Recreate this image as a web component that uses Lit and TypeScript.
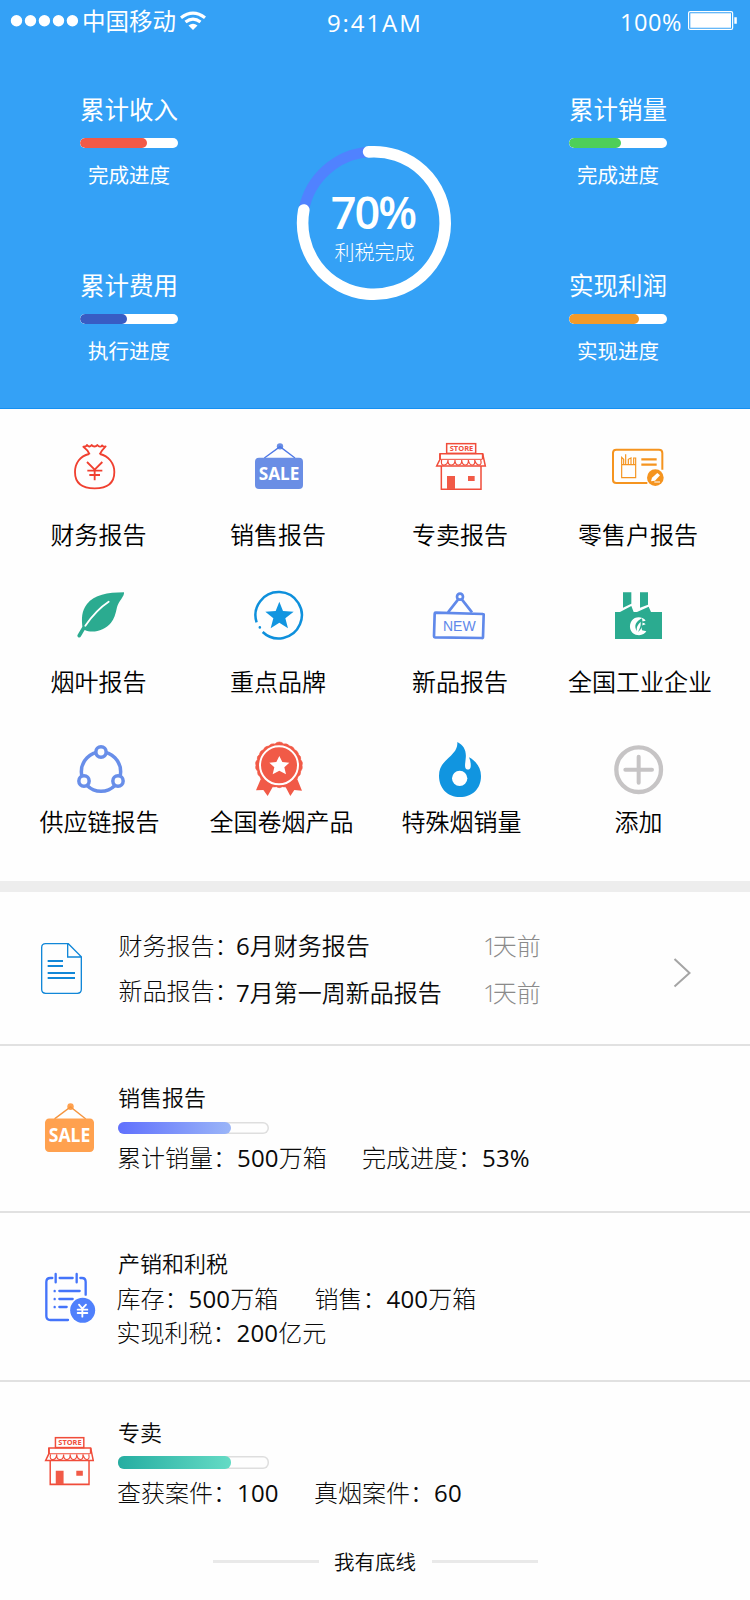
import { LitElement, html, svg, css, type SVGTemplateResult } from "lit";
import { customElement, property } from "lit/decorators.js";
import { styleMap } from "lit/directives/style-map.js";

const bag = svg`<g fill="none" stroke="#f04030" stroke-width="5.5" stroke-linejoin="round">
  <path d="M267 102C240 108 225 130 225 156C225 192 250 205 284 205C318 205 343 192 343 156C343 130 326 108 300 102"/>
  <path d="M269 103C264 92 257 85 250 80C255 80 260 79 261 75C266 82 272 80 275 75C279 81 288 81 292 75C297 81 303 82 306 76C309 80 313 81 317 79C310 86 303 94 299 103"/>
  <path d="M261 126L284 149L307 126M262 152H307M268 165H300M284 149V181"/></g>`;
const sale = (c: string, line: string) => svg`<g>
  <circle cx="840" cy="79" r="9.5" fill=${c}/>
  <path d="M793 114L840 80L885 114" fill="none" stroke=${line} stroke-width="4"/>
  <rect x="765" y="113" width="144" height="94" rx="12" fill=${c}/>
  <text x="776" y="180" textLength="122" lengthAdjust="spacingAndGlyphs" font-family="Noto Sans, Open Sans, sans-serif" font-weight="700" font-size="54" fill="#fff">SALE</text></g>`;
const store = svg`<g fill="none" stroke="#f04c3a" stroke-width="4.5">
  <rect x="215" y="71" width="87" height="29"/>
  <path d="M195 101H323L331 138H185L195 118Z"/>
  <path d="M195 118V101M323 101V118" stroke-width="5"/>
  <path d="M195 118H322" stroke-width="3"/>
  <path d="M200 120Q196 137 208 135Q218 134 219 120Q218 136 230 135Q240 134 240 120Q240 136 251 135Q261 134 260 120Q261 136 272 135Q281 134 280 120Q283 136 293 135Q301 134 299 120Q304 136 313 135Q321 133 317 120" stroke-width="3.5"/>
  <path d="M199 138V208H318V138"/>
  <path d="M216 168H240V207H216ZM279 168H299V183H279Z" fill="#f15a47" stroke="none"/>
  <text x="224" y="93" textLength="71" lengthAdjust="spacingAndGlyphs" font-family="Open Sans, Noto Sans, sans-serif" font-weight="700" font-size="20" fill="#f04c3a" stroke="none">STORE</text></g>`;
const card = svg`<g fill="none" stroke="#f5941f" stroke-width="6">
  <path d="M817 189H724Q714 189 714 179V99Q714 89 724 89H852Q862 89 862 99V149"/>
  <path d="M740 134H782V173H740ZM740 134V112L746 118V134M752 134V103M760 134V118L768 114V134M776 134V114H782V134" stroke-width="3.5"/>
  <path d="M799 118H845M799 134H845" stroke-width="6.500"/>
  <circle cx="841" cy="173" r="25" fill="#f5941f" stroke="none"/>
  <path d="M828 184L831 173L847 159L855 166L840 182Z" fill="#fff" stroke="none"/>
  <path d="M838 186H855" stroke="#fff" stroke-width="3"/></g>`;
const leaf = svg`<g><path d="M372 517C374 529 356 543 351 562C347 583 342 597 333 608C314 632 278 641 254 630L243 649Q239 656 233 650L232 646L247 620C245 595 244 574 261 552C283 525 322 517 372 517Z" fill="#2bab90"/>
  <path d="M326 545C294 566 276 588 256 617" fill="none" stroke="#fff" stroke-width="5.5" stroke-linecap="round"/></g>`;
const starBadge = svg`<g fill="none" stroke="#0e90dc" stroke-width="7.500" stroke-linecap="round">
  <path d="M769.800 605A69.500 69.500 0 1 1 788 634" stroke-linecap="butt"/><path d="M779.500 620V620.5"/>
  <path d="M838 543L849 571L881 573L856 593L864 623L838 606L812 623L820 593L796 573L827 571Z" fill="#1195e0" stroke="none"/></g>`;
const newSign = svg`<g fill="none" stroke="#6089ea" stroke-width="8">
  <circle cx="255" cy="530" r="9"/><path d="M249 539L219 577M261 539L291 577"/>
  <path d="M182 578L324 582Q327 582 326 586L324 651Q324 655 320 654L180 652Q177 652 177 649L179 581Q179 578 182 578Z"/>
  <text x="204" y="633" textLength="98" lengthAdjust="spacingAndGlyphs" font-family="Liberation Sans, sans-serif" font-size="46" fill="#6089ea" stroke="none">NEW</text></g>`;
const factory = svg`<g fill="#2bab90">
  <path d="M744 517H769V551L744 563ZM795 517H819V554L795 563Z"/>
  <path d="M720 576H735L769 558L776 576H786L821 560L828 576H861V657H720Z"/>
  <path d="M812 602C805 589 780 587 770 602C760 617 765 638 782 644C797 648 809 643 814 634L801 631L799 617L812 613C808 608 800 607 795 606Z" fill="#fff"/>
  <path d="M801 595C783 604 775 617 786 634C783 623 788 614 797 605C798 616 796 622 789 636C804 626 804 611 801 595Z"/></g>`;
const share = svg`<g fill="none" stroke="#688ee9">
  <circle cx="303" cy="185" r="59" stroke-width="10.500"/>
  <g fill="#fdfdfd" stroke-width="10.500"><circle cx="303" cy="126" r="15.500"/><circle cx="252" cy="213" r="15.500"/><circle cx="354" cy="213" r="15.500"/></g></g>`;
const medal = svg`<g fill="#f15a47">
  <path d="M782 208L768 241L790 240L803 258L821 226H854L871 258L883 240L906 242L892 208Z"/>
  <path d="M838 96Q846 96 851 102Q861 99 869 108Q879 108 884 119Q894 123 896 134Q904 139 902 149Q910 157 906 166Q909 176 902 184Q903 195 894 200Q892 211 882 214Q876 225 865 225Q857 234 847 230Q838 236 829 230Q818 234 810 225Q798 224 793 214Q782 210 780 200Q771 194 773 184Q764 176 768 166Q764 156 772 149Q770 139 778 134Q780 122 790 119Q795 108 806 108Q814 99 825 102Q830 96 838 96Z" stroke="#f15a47" stroke-width="2"/>
  <circle cx="837" cy="166" r="57" fill="none" stroke="#fff" stroke-width="6"/>
  <path d="M838 138L847 156L868 158L853 172L858 193L838 182L818 193L823 172L808 158L829 156Z" fill="#fff"/></g>`;
const flame = svg`<g><path d="M247 96C267 106 275 123 272 146C271 158 269 165 271 173C276 183 286 179 287 170C288 160 286 151 282 142C303 153 318 172 318 198C318 237 291 261 255 261C218 261 192 235 192 197C192 175 202 160 221 143C239 127 248 115 247 96Z" fill="#1195e0"/><circle cx="254" cy="205" r="23" fill="#fff"/></g>`;
const add = svg`<g fill="none" stroke="#c6c4c5"><circle cx="791" cy="179" r="67" stroke-width="13"/><path d="M791 140V218M751 179H831" stroke-width="12" stroke-linecap="round"/></g>`;
const doc = svg`<g fill="none" stroke="#1187d8" stroke-width="4"><path d="M205 131L244 170V268Q244 280 232 280H137Q125 280 125 268V143Q125 131 137 131H205ZM203 131V171H244"/>
  <path d="M143 183H189M143 198H189M143 219H225M143 234H225" stroke-width="6"/></g>`;
const tax = svg`<g fill="none" stroke="#4474fa" stroke-width="7" stroke-linecap="round">
  <path d="M157 234H151Q139 234 139 246V348Q139 360 151 360H204M179 234H218M241 234H246Q257 234 257 246V284M167 222V247M230 222V247" />
  <path d="M178 273H239M178 297H218M178 321H200M164 273V273.5M164 297V297.5M164 321V321.500"/>
  <circle cx="248" cy="331" r="37.500" fill="#4f80fc" stroke="none"/>
  <path d="M237 314L247 326L258 314M233 329H262M233 339H262M247 327V350" stroke="#fff" stroke-width="5.500"/></g>`;

interface Tile { label: string; icon: SVGTemplateResult; box: string; dx: number }
const ROWS: { cls: string; tiles: Tile[] }[] = [
  { cls: "first", tiles: [
    { label: "财务报告", icon: bag, box: "207 60 180 180", dx: -0.5 },
    { label: "销售报告", icon: sale("#6a8ee5", "#4e78e6"), box: "747 60 180 180", dx: -1 },
    { label: "专卖报告", icon: store, box: "162 60 180 180", dx: 1 },
    { label: "零售户报告", icon: card, box: "702 60 180 180", dx: -1 }] },
  { cls: "second", tiles: [
    { label: "烟叶报告", icon: leaf, box: "207 504 180 180", dx: -0.5 },
    { label: "重点品牌", icon: starBadge, box: "747 502 180 180", dx: -1 },
    { label: "新品报告", icon: newSign, box: "162 504 180 180", dx: 1 },
    { label: "全国工业企业", icon: factory, box: "702 504 180 180", dx: 1 }] },
  { cls: "third", tiles: [
    { label: "供应链报告", icon: share, box: "207 90 180 180", dx: 0.5 },
    { label: "全国卷烟产品", icon: medal, box: "747 90 180 180", dx: 2.5 },
    { label: "特殊烟销量", icon: flame, box: "162 90 180 180", dx: 2.5 },
    { label: "添加", icon: add, box: "702 90 180 180", dx: -0.5 }] },
];

@customElement("kpi-meter")
export class KpiMeter extends LitElement {
  @property() name = "";
  @property() caption = "";
  @property() color = "";
  @property({ type: Number }) value = 0;
  static styles = css`
    :host { display: block; width: 98px; color: #fff; text-align: center; white-space: nowrap; }
    .name { font-size: 24.500px; line-height: 32px; height: 32px; }
    .track { height: 10px; margin-top: 12px; border-radius: 5px; background: #fff; overflow: hidden; }
    .fill { height: 10px; border-radius: 5px; }
    .caption { font-size: 20.500px; line-height: 28px; margin-top: 13px; height: 28px; }
  `;
  render() {
    return html`<div class="name">${this.name}</div>
      <div class="track"><div class="fill" style=${styleMap({ width: `${this.value}px`, background: this.color })}></div></div>
      <div class="caption">${this.caption}</div>`;
  }
}

@customElement("app-root")
export class AppRoot extends LitElement {
  static styles = css`
    :host { display: block; width: 750px; height: 1600px; overflow: hidden; background: #fefefe; color: #0a0a0a;
      font-family: "Open Sans", "Noto Sans CJK SC", sans-serif; font-size: 24px; font-weight: 350; }
    * { box-sizing: border-box; }
    svg { display: block; flex: none; }
    .hero { height: 409px; background: #34a1f6; border-bottom: 1px solid #1590f2; color: #fff; font-weight: 400; }
    .status { display: flex; height: 42px; padding-left: 10px; white-space: nowrap; }
    .carrier { font-size: 23.500px; line-height: 42px; margin-left: 3px; width: 97px; }
    .time { font-size: 24px; line-height: 46px; margin-left: 120px; width: 100px; letter-spacing: 1.900px; }
    .power { font-size: 23.500px; line-height: 45px; margin-left: 193px; width: 67px; letter-spacing: 0.600px; }
    .board { display: grid; grid-template-columns: 98px 391px 98px; margin-left: 80px; padding-top: 52px; }
    .side { display: flex; flex-direction: column; gap: 81px; }
    .ring { display: grid; width: 156px; height: 156px; margin: 51px 0 0 118px; }
    .ring > * { grid-area: 1 / 1; }
    .score { padding: 38px 1px 0 0; text-align: center; white-space: nowrap; }
    .pct { font-size: 45px; font-weight: 600; line-height: 58px; letter-spacing: -2px; padding-right: 1px; }
    .goal { font-size: 20px; font-weight: 300; line-height: 24px; padding-left: 2px; }
    .tiles { height: 472px; }
    .row { display: grid; grid-template-columns: repeat(4, 180px); padding-left: 9px; }
    .first { padding-top: 31px; }
    .second { padding-top: 37px; }
    .third { padding-top: 42px; }
    .tile { display: flex; flex-direction: column; align-items: center; white-space: nowrap; color: #000; }
    .label { line-height: 32px; margin-top: 19px; }
    .second .label { margin-top: 18px; }
    .third .label { margin-top: 6px; }
    .band { height: 11px; background: #ededed; }
    .item { display: flex; padding-left: 39px; border-bottom: 2px solid #e1e1e1; white-space: nowrap; }
    .body { margin-left: 19px; line-height: 32px; }
    .news { height: 154px; }
    .news svg.ic { margin-top: 46px; }
    .msgs { display: grid; grid-template-columns: 117px 247px 189px; margin-left: 20px; padding-top: 38px; height: 130px; }
    .c { display: flex; flex-direction: column; gap: 15px; line-height: 32px; }
    .c.tag { gap: 13px; margin-left: -0.500px; font-weight: 300; }
    .ago { color: #8a8a8a; font-weight: 250; }
    .num { letter-spacing: -4px; }
    .arrow { margin-top: 64px; }
    .sales { height: 167px; }
    .sales svg { margin-top: 52px; }
    .sales .body { padding-top: 35px; }
    .title { font-size: 22px; line-height: 32px; }
    .bar { width: 151px; height: 12px; margin-top: 9px; border-radius: 6px; box-shadow: inset 0 0 0 1.500px #dedede; }
    .level { width: 113px; height: 12px; border-radius: 6px; background: linear-gradient(90deg, #6070fd, #9ab5f8); }
    .level.green { background: linear-gradient(90deg, #25ada1, #65dbc5); height: 13px; }
    .facts { display: flex; line-height: 32px; margin-left: -1px; font-weight: 300; }
    .digits { font-weight: 400; }
    .facts .digits { letter-spacing: 0.200px; }
    .sales .facts { margin-top: 8px; }
    .sales .fact { width: 245px; }
    .output { height: 169px; }
    .output svg { margin-top: 55px; }
    .output .body { padding-top: 34px; }
    .output .facts { margin: 4px 0 0 -1.500px; }
    .output .facts.sum { margin-top: 2px; }
    .fact { width: 198px; }
    .store { border: 0; height: 144px; }
    .store svg { margin-top: 49px; }
    .store .body { padding-top: 34px; }
    .store .facts { margin-top: 8px; }
    .store .fact { width: 197px; }
    .store .bar { height: 13px; margin-top: 8px; }
    .end { display: flex; justify-content: center; align-items: center; height: 32px; margin-top: 19px; gap: 15.500px; font-size: 20.500px; }
    .rule { width: 106px; height: 3px; background: #e9e9e9; }
  `;

  private icon(body: SVGTemplateResult, box: string) {
    return html`<svg class="ic" width="60" height="60" viewBox=${box} preserveAspectRatio="none">${body}</svg>`;
  }

  private fact(name: string, digits: string, unit = "") {
    return html`<span class="fact">${name}：<span class="digits">${digits}</span>${unit}</span>`;
  }

  render() {
    return html`
      <header class="hero">
        <div class="status">
          <svg width="69" height="41" viewBox="10 0 69 41" fill="#fff">
            <circle cx="16.500" cy="20.700" r="5.700"/><circle cx="30.500" cy="20.700" r="5.700"/><circle cx="44.400" cy="20.700" r="5.700"/><circle cx="58.500" cy="20.700" r="5.700"/><circle cx="72.400" cy="20.700" r="5.700"/></svg>
          <span class="carrier">中国移动</span>
          <svg width="28" height="41" viewBox="179 0 28 41"><path d="M181 17.800Q193 8.500 205 17.800M185.500 22Q193 16.200 200.500 22" fill="none" stroke="#fff" stroke-width="3.200"/><path d="M188.500 25.500Q193 21.800 197.500 25.500L193 30Z" fill="#fff"/></svg>
          <span class="time">9:41AM</span>
          <span class="power">100%</span>
          <svg width="52" height="41" viewBox="687 0 52 41"><rect x="688.600" y="11.600" width="44" height="17.800" rx="1.500" fill="none" stroke="#fff" stroke-width="1.200"/><path d="M690.300 13.300H731V27.800H690.300ZM734.300 17.300H736.800V23.800H734.300Z" fill="#fff"/></svg>
        </div>
        <div class="board">
          <div class="side">
            <kpi-meter name="累计收入" caption="完成进度" color="#f15a48" .value=${67}></kpi-meter>
            <kpi-meter name="累计费用" caption="执行进度" color="#385cc4" .value=${47}></kpi-meter>
          </div>
          <div class="ring">
            <svg width="156" height="156" viewBox="296 145 156 156" fill="none" stroke-linecap="round">
              <path d="M303.800 210A71.300 71.300 0 0 1 368.600 152" stroke="#5082ff" stroke-width="10.500"/>
              <path d="M368.600 151.900A71.300 71.300 0 1 1 303.800 210" stroke="#fff" stroke-width="11.600"/></svg>
            <div class="score"><div class="pct">70%</div><div class="goal">利税完成</div></div>
          </div>
          <div class="side">
            <kpi-meter name="累计销量" caption="完成进度" color="#4ecf58" .value=${52}></kpi-meter>
            <kpi-meter name="实现利润" caption="实现进度" color="#f39a29" .value=${70}></kpi-meter>
          </div>
        </div>
      </header>
      <nav class="tiles">
        ${ROWS.map((r) => html`<div class="row ${r.cls}">${r.tiles.map((t) => html`<div class="tile">
          ${this.icon(t.icon, t.box)}<span class="label" style=${styleMap({ transform: `translateX(${t.dx}px)` })}>${t.label}</span></div>`)}</div>`)}
      </nav>
      <div class="band"></div>
      <section class="item news">
        ${this.icon(doc, "117 114 180 180")}
        <div class="msgs">
          <div class="c tag"><span>财务报告：</span><span>新品报告：</span></div>
          <div class="c"><span><span class="digits">6</span>月财务报告</span><span><span class="digits">7</span>月第一周新品报告</span></div>
          <div class="c ago"><span><span class="num">1</span>天前</span><span><span class="num">1</span>天前</span></div>
        </div>
        <svg class="arrow" width="20" height="34" viewBox="672 956 20 34"><path d="M674.500 959L689.500 973L674.500 986.500" fill="none" stroke="#a5a5a5" stroke-width="2"/></svg>
      </section>
      <section class="item sales">
        ${this.icon(sale("#ffa14f", "#f5953f"), "747.4 55 176.3 169")}
        <div class="body">
          <div class="title">销售报告</div>
          <div class="bar"><div class="level"></div></div>
          <div class="facts">${this.fact("累计销量", "500", "万箱")}${this.fact("完成进度", "53%")}</div>
        </div>
      </section>
      <section class="item output">
        ${this.icon(tax, "117 204 180 180")}
        <div class="body">
          <div class="title">产销和利税</div>
          <div class="facts">${this.fact("库存", "500", "万箱")}${this.fact("销售", "400", "万箱")}</div>
          <div class="facts sum">${this.fact("实现利税", "200", "亿元")}</div>
        </div>
      </section>
      <section class="item store">
        ${this.icon(store, "164.6 51.4 184 176")}
        <div class="body">
          <div class="title">专卖</div>
          <div class="bar"><div class="level green"></div></div>
          <div class="facts">${this.fact("查获案件", "100")}${this.fact("真烟案件", "60")}</div>
        </div>
      </section>
      <footer class="end"><i class="rule"></i><span>我有底线</span><i class="rule"></i></footer>
    `;
  }
}
